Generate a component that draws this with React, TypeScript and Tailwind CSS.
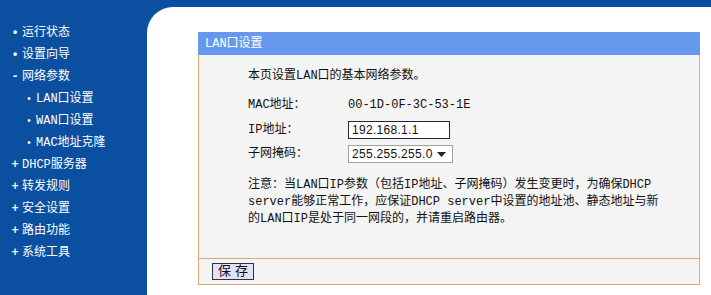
const menu = [
  { label: "运行状态", mark: "•", sub: false },
  { label: "设置向导", mark: "•", sub: false },
  { label: "网络参数", mark: "-", sub: false },
  { label: "LAN口设置", mark: "•", sub: true },
  { label: "WAN口设置", mark: "•", sub: true },
  { label: "MAC地址克隆", mark: "•", sub: true },
  { label: "DHCP服务器", mark: "+", sub: false },
  { label: "转发规则", mark: "+", sub: false },
  { label: "安全设置", mark: "+", sub: false },
  { label: "路由功能", mark: "+", sub: false },
  { label: "系统工具", mark: "+", sub: false },
];

const font = "font-['Liberation_Mono','Noto_Sans_CJK_SC',monospace]";

export default function App() {
  return (
    <div className={`flex w-[711px] h-[295px] bg-[#0b50a0] overflow-hidden text-[12px] ${font}`}>
      {/* side menu */}
      <div className="w-[147px] shrink-0 pt-[22px]">
        {menu.map((m) => (
          <div
            key={m.label}
            className={`flex items-center h-[22px] text-white ${m.sub ? "pl-[23px]" : "pl-[9px]"}`}
          >
            <span className={`w-[12px] text-center ${m.sub ? "text-[10px]" : "font-bold text-[#eef8ee]"}`}>
              {m.mark}
            </span>
            <span className="ml-[1px] whitespace-nowrap">{m.label}</span>
          </div>
        ))}
      </div>

      {/* main area */}
      <div className="flex-1 mt-[7px] bg-white rounded-tl-[26px] pl-[51px] pt-[25px] pr-[12px]">
        <div className="w-[502px]">
          <div className="h-[23px] bg-[#6699ee] text-white flex items-center pl-[7px]">LAN口设置</div>

          <div className="bg-[#f4f4f4] border-x border-[#d9aa72] h-[203px] pl-[49px] pt-[12px] text-[#111]">
            <div className="h-[18px] leading-[18px] whitespace-nowrap">本页设置LAN口的基本网络参数。</div>

            <div className="mt-[10px] flex items-center h-[20px]">
              <span className="w-[100px]">MAC地址：</span>
              <span>00-1D-0F-3C-53-1E</span>
            </div>
            <div className="mt-[5px] flex items-center h-[20px]">
              <span className="w-[100px]">IP地址：</span>
              <div className="w-[102px] h-[18px] border border-[#1c2440] bg-white flex items-center pl-[3px] font-['Liberation_Sans',sans-serif] text-[12px] tracking-[0.3px]">
                192.168.1.1
              </div>
            </div>
            <div className="mt-[4px] flex items-center h-[20px]">
              <span className="w-[100px]">子网掩码：</span>
              <div className="w-[105px] h-[18px] border border-[#a0a0a0] bg-white flex items-center pl-[3px] font-['Liberation_Sans',sans-serif] text-[12px] tracking-[0.3px]">
                <span className="flex-1">255.255.255.0</span>
                <svg width="9" height="5" viewBox="0 0 9 5" className="mr-[6px]">
                  <path d="M0 0H9L4.5 5Z" fill="#222" />
                </svg>
              </div>
            </div>

            <div className="mt-[13px] leading-[17px] whitespace-nowrap">
              注意：当LAN口IP参数（包括IP地址、子网掩码）发生变更时，为确保DHCP
              <br />
              server能够正常工作，应保证DHCP server中设置的地址池、静态地址与新
              <br />
              的LAN口IP是处于同一网段的，并请重启路由器。
            </div>
          </div>

          <div className="h-[27px] bg-[#f4f4f4] border border-[#d9aa72] flex items-center pl-[13px]">
            <button className="w-[42px] h-[17px] border border-[#303040] bg-[#e2e2f8] text-[13px] leading-none text-[#111] tracking-[4px] pl-[4px]">
              保存
            </button>
          </div>
        </div>
      </div>
    </div>
  );
}
